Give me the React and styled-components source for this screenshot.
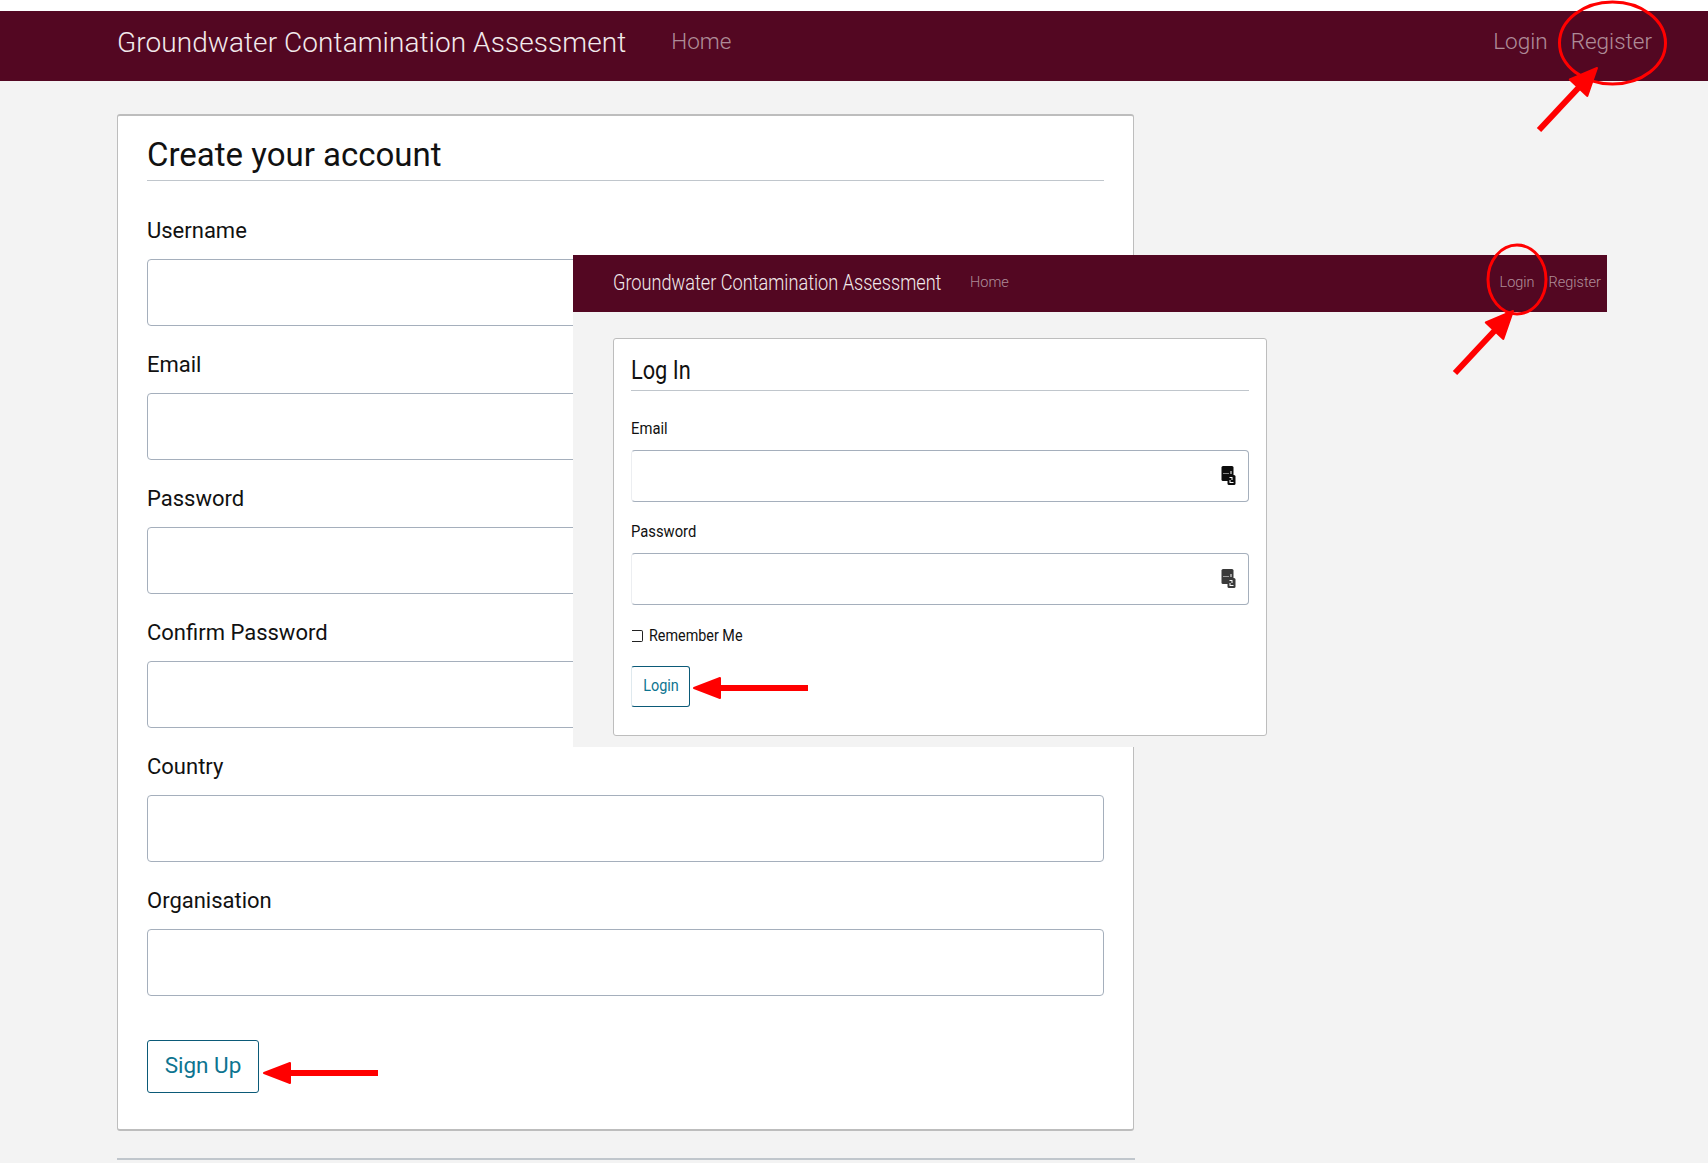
import React from "react";
import styled, { createGlobalStyle } from "styled-components";

const Global = createGlobalStyle`
  html, body { margin: 0; padding: 0; background: #fff; }
  body { font-family: Roboto, "Liberation Sans", sans-serif; color: #111; }
  * { box-sizing: border-box; }
`;

const Page = styled.div`
  position: relative;
  width: 1708px;
  height: 1163px;
  padding-top: 11px;
  overflow: hidden;
`;
const Body = styled.div`
  background: #f3f3f3;
  height: 1152px;
`;
const Bar = styled.nav`
  display: flex;
  align-items: center;
  background: #530722;
  height: ${p => (p.$small ? 57 : 70)}px;
  padding: ${p => (p.$small ? "0 6px 2px 40px" : "0 56px 8px 117px")};
`;
const Brand = styled.span`
  display: inline-block;
  color: #f2eaec;
  font-size: ${p => (p.$small ? 22 : 28)}px;
  font-weight: 300;
  letter-spacing: ${p => (p.$small ? 0 : 0.07)}px;
  width: ${p => (p.$small ? "328px" : "auto")};
  margin-right: ${p => (p.$small ? 29 : 45)}px;
  white-space: nowrap;
  transform: scaleX(${p => (p.$small ? 0.825 : 1)});
  transform-origin: left center;
`;
const NavLink = styled.a`
  color: rgba(255, 255, 255, 0.55);
  font-size: ${p => (p.$small ? 14.5 : 22.5)}px;
  font-weight: 300;
  margin-left: ${p => (p.$gap ? (p.$small ? 14 : 23) : 0)}px;
  margin-top: ${p => (p.$small ? 0 : -2)}px;
`;
const Spacer = styled.div`
  flex: 1;
`;
const Main = styled.main`
  padding: 33px 0 0 117px;
`;
const Card = styled.section`
  background: #fff;
  border: 1px solid #bdbdbd;
  border-top-width: ${p => (p.$small ? 1 : 2)}px;
  border-bottom-width: ${p => (p.$small ? 1 : 2)}px;
  border-radius: 3px;
  width: ${p => (p.$small ? 654 : 1017)}px;
  height: ${p => (p.$small ? 398 : 1017)}px;
  padding: ${p => (p.$small ? "15px 17px 0" : "20px 29px 0")};
`;
const Title = styled.h1`
  margin: 0;
  font-weight: 400;
  font-size: ${p => (p.$small ? 25 : 33)}px;
  line-height: ${p => (p.$small ? 34 : 38)}px;
  padding-bottom: ${p => (p.$small ? 2 : 6)}px;
  border-bottom: 1px solid #c0c6cc;
`;
const Squeeze = styled.span`
  display: inline-block;
  white-space: nowrap;
  transform: scaleX(${p => p.$x || 0.87});
  transform-origin: ${p => p.$origin || "left"} center;
`;
const Fields = styled.div`
  display: flex;
  flex-direction: column;
  gap: ${p => (p.$small ? 18 : 26)}px;
  margin-top: ${p => (p.$small ? 26 : 37)}px;
`;
const Label = styled.label`
  display: block;
  font-size: ${p => (p.$small ? 17 : 22)}px;
  line-height: ${p => (p.$small ? 22 : 26)}px;
  margin-bottom: ${p => (p.$small ? 11 : 15)}px;
`;
const InputWrap = styled.div`
  position: relative;
`;
const Input = styled.input`
  display: block;
  width: 100%;
  height: ${p => (p.$small ? 52 : 67)}px;
  border: 1px solid #a5afbc;
  border-left-color: ${p => (p.$small ? "#eceef1" : "#a5afbc")};
  border-radius: 4px;
  background: #fff;
  outline: none;
`;
const KeyIcon = styled.svg`
  position: absolute;
  right: 13px;
  top: 16px;
  width: 15px;
  height: 19px;
  color: ${p => p.$tone};
`;
const CheckRow = styled.div`
  display: flex;
  align-items: center;
  gap: 6px;
  margin-top: 20px;
  font-size: 16.5px;
  line-height: 22px;
`;
const Check = styled.span`
  width: 11px;
  height: 12px;
  border: 1px solid #222;
  border-left: none;
  border-radius: 0 2px 2px 0;
  margin-left: 1px;
`;
const Button = styled.button`
  display: block;
  background: #fff;
  color: #0d7490;
  border: 1px solid #0b5a78;
  border-left-color: ${p => (p.$small ? "#dfe9ee" : "#0b5a78")};
  border-radius: 3px;
  font-family: inherit;
  font-size: ${p => (p.$small ? 17 : 22.5)}px;
  width: ${p => (p.$small ? 59 : 112)}px;
  height: ${p => (p.$small ? 41 : 53)}px;
  margin-top: ${p => (p.$small ? 19 : 44)}px;
  padding: 0 0 ${p => (p.$small ? 3 : 4)}px;
`;
const Rule = styled.hr`
  width: 1018px;
  margin: 27px 0 0;
  border: none;
  border-top: 2px solid #c0c6cc;
`;
const LoginWindow = styled.div`
  position: absolute;
  left: 573px;
  top: 255px;
  width: 1034px;
  height: 492px;
  background: #f3f3f3;
`;
const LoginMain = styled.div`
  padding: 26px 0 0 40px;
`;
const Marks = styled.svg`
  position: absolute;
  inset: 0;
  width: 1708px;
  height: 1163px;
  pointer-events: none;
`;

const Key = ({ tone }) => (
  <KeyIcon $tone={tone} viewBox="0 0 14 19">
    <rect x="0" y="0" width="12" height="15" rx="1.5" fill="currentColor" />
    <rect x="6" y="9" width="8" height="10" rx="1.5" fill="currentColor" />
    <g fill="#fff">
      <rect x="2" y="7" width="1" height="1" />
      <rect x="4" y="7" width="1" height="1" />
      <rect x="6" y="7" width="1" height="1" />
      <rect x="9" y="5" width="1" height="3" />
      <rect x="8" y="11" width="3" height="1" />
      <rect x="10" y="12" width="1" height="2" />
      <rect x="8" y="14" width="1" height="2" />
      <rect x="8" y="16" width="4" height="1" />
    </g>
  </KeyIcon>
);

const Nav = ({ small }) => (
  <Bar $small={small}>
    <Brand $small={small}>Groundwater Contamination Assessment</Brand>
    <NavLink $small={small}>Home</NavLink>
    <Spacer />
    <NavLink $small={small}>Login</NavLink>
    <NavLink $small={small} $gap>Register</NavLink>
  </Bar>
);

const signupFields = ["Username", "Email", "Password", "Confirm Password", "Country", "Organisation"];

const Arrow = ({ x1, y1, x2, y2, w = 6, hw = 12, hl = 27 }) => {
  const a = Math.atan2(y2 - y1, x2 - x1);
  const c = Math.cos(a), s = Math.sin(a);
  const bx = x2 - c * hl, by = y2 - s * hl;
  return (
    <g stroke="#ff0000" fill="#ff0000" strokeLinejoin="round">
      <line x1={x1} y1={y1} x2={bx} y2={by} strokeWidth={w} />
      <polygon
        strokeWidth="2"
        points={`${x2},${y2} ${bx - s * hw},${by + c * hw} ${bx + s * hw},${by - c * hw}`}
      />
    </g>
  );
};

export default function App() {
  return (
    <Page>
      <Global />
      <Body>
        <Nav />
        <Main>
          <Card>
            <Title>Create your account</Title>
            <Fields>
              {signupFields.map(f => (
                <div key={f}>
                  <Label>{f}</Label>
                  <Input />
                </div>
              ))}
            </Fields>
            <Button>Sign Up</Button>
          </Card>
          <Rule />
        </Main>
      </Body>
      <LoginWindow>
        <Nav small />
        <LoginMain>
          <Card $small>
            <Title $small><Squeeze>Log In</Squeeze></Title>
            <Fields $small>
              <div>
                <Label $small><Squeeze>Email</Squeeze></Label>
                <InputWrap>
                  <Input $small />
                  <Key tone="#0c0c0c" />
                </InputWrap>
              </div>
              <div>
                <Label $small><Squeeze>Password</Squeeze></Label>
                <InputWrap>
                  <Input $small />
                  <Key tone="#3a3a3a" />
                </InputWrap>
              </div>
            </Fields>
            <CheckRow>
              <Check />
              <Squeeze>Remember Me</Squeeze>
            </CheckRow>
            <Button $small><Squeeze $origin="center" $x={0.85}>Login</Squeeze></Button>
          </Card>
        </LoginMain>
      </LoginWindow>
      <Marks viewBox="0 0 1708 1163">
        <ellipse cx="1612.5" cy="43" rx="53" ry="41" fill="none" stroke="#ff0000" strokeWidth="3" />
        <ellipse cx="1517" cy="279.5" rx="29" ry="34.5" fill="none" stroke="#ff0000" strokeWidth="3" />
        <Arrow x1={1539} y1={130} x2={1597} y2={68} />
        <Arrow x1={1455} y1={373} x2={1513} y2={311} />
        <Arrow x1={378} y1={1073} x2={264} y2={1073} w={6} hw={10} hl={26} />
        <Arrow x1={808} y1={688} x2={694} y2={688} w={6} hw={10} hl={26} />
      </Marks>
    </Page>
  );
}
